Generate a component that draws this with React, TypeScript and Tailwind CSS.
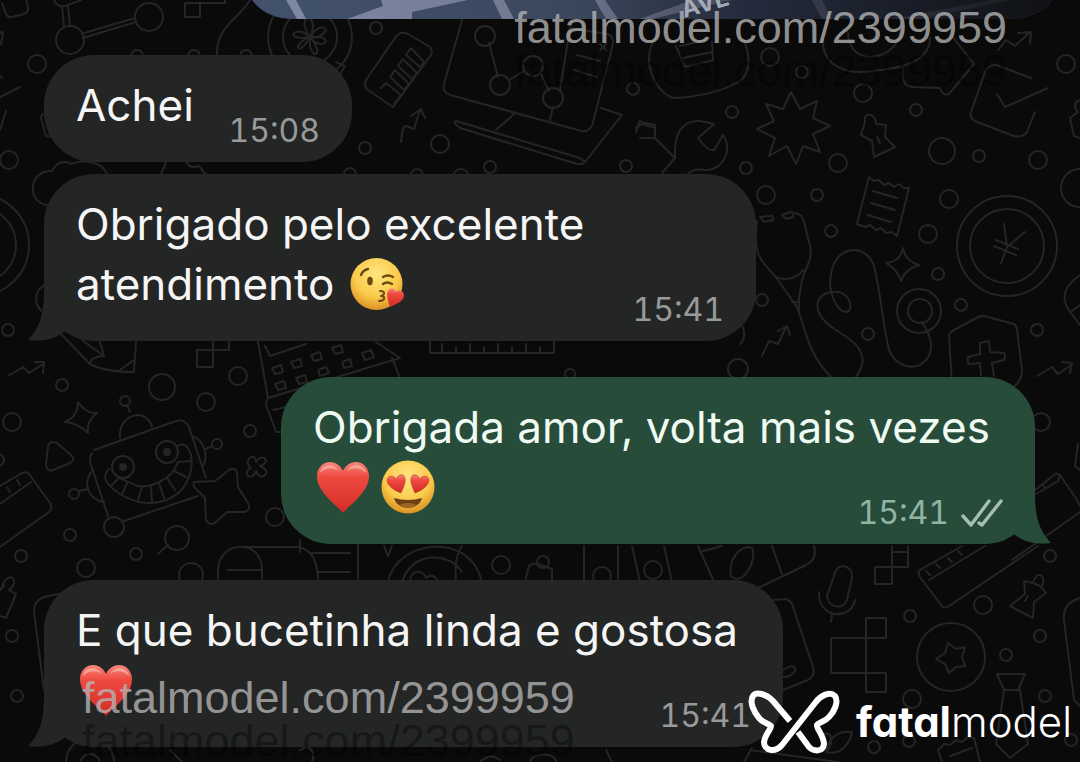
import { ReactNode } from "react";
import clsx from "clsx";

type MessageType = {
  id: number;
  time: string;
  mine?: boolean;
  tail?: boolean;
  size: string;
  body: ReactNode;
};

// cx, cy, r
const bubblesDots = [
  [70, 40, 14], [149, 17, 14], [37, 64, 9], [9, 160, 9], [137, 56, 6], [194, 56, 6], [246, 56, 6],
  [376, 28, 6], [485, 36, 10], [500, 85, 10], [533, 66, 10], [553, 98, 10], [365, 148, 6], [440, 144, 9],
  [490, 167, 6], [350, 174, 6], [417, 175, 6], [461, 177, 8], [633, 89, 6], [626, 166, 6],
  [770, 57, 9], [802, 72, 6], [732, 112, 6], [863, 93, 9], [916, 110, 6], [838, 163, 9], [746, 168, 6],
  [942, 151, 13], [979, 156, 6], [1038, 160, 9], [1066, 64, 9], [766, 195, 9], [817, 195, 6], [949, 199, 9],
  [831, 231, 6], [928, 234, 9], [938, 274, 6], [762, 300, 6], [868, 334, 6], [961, 305, 6], [1037, 330, 6],
  [1080, 188, 19], [738, 369, 10], [919, 311, 22], [920, 311, 12], [1007, 246, 50], [1007, 246, 37],
  [62, 385, 6], [162, 387, 13], [206, 402, 9], [238, 376, 9], [12, 422, 9], [125, 401, 5], [250, 431, 6],
  [217, 444, 5], [275, 517, 9], [74, 494, 5], [114, 527, 10], [177, 538, 12], [136, 554, 6], [21, 556, 6],
  [86, 568, 9], [191, 575, 12], [70, 535, 6], [8, 330, 6], [-2, 460, 6], [12, 636, 6], [17, 696, 6],
  [501, 565, 9], [543, 562, 6], [602, 576, 9], [653, 570, 9], [570, 374, 5], [1041, 422, 9], [1050, 556, 6],
  [983, 605, 9], [910, 616, 6], [1040, 636, 6], [1006, 655, 6], [951, 657, 34], [912, 699, 9], [1045, 696, 6],
  [874, 747, 6], [909, 741, 6], [1071, 740, 6], [310, 37, 42], [310, 37, 27], [123, 467, 11], [167, 452, 11],
  [-22, 245, 38], [-22, 245, 51], [90, 762, 24], [90, 764, 10], [695, 10, 9],
];

const doodles = [
  // card, molecule and arrows in the top left corner
  "M2 3 L6 14 Q8 18 12 17 L24 14 Q29 12 28 7 L26 0",
  "M64 27 L62 6 M70 26 L68 6 M84 33 L135 18 M83 38 L136 22 M54 0 Q58 8 65 6 L81 0",
  "M0 97 L20 87 M0 130 L6 111 M0 76 L2 78 M-4 34 L3 32 L1 44",
  "M43 114 Q40 116 42 122 L46 136 L54 137",
  "M185 17 V3 H200 V17 Z M200 3 H225 V-3 M250 0 C240 18 216 26 217 55",
  "M338 78 L345 66 L336 62",
  // flower in the coin
  "M310 37 C300 22 306 18 310 18 C314 22 314 28 310 37 C320 22 328 28 325 32 C320 38 315 38 310 37 C326 36 330 42 322 44 C316 44 312 40 310 37 C320 50 318 54 314 54 C310 50 309 44 310 37 C303 50 297 50 298 46 C302 40 306 38 310 37 C294 40 290 34 296 32 C302 30 306 34 310 37",
  // cloud and hat between the first two bubbles
  "M47 205 C30 203 28 180 42 173 C48 170 51 172 53 170 C56 162 66 160 71 164 C84 158 102 162 107 174",
  "M161 174 L167 160 L186 161 C188 167 194 168 198 166 C204 168 202 174 206 174",
  "M45 285 C34 290 33 305 43 312",
  // memory card
  "M366 80 L395 38 Q400 30 408 34 L430 47 Q433 51 431 55 L393 107 L368 90 Q363 86 366 80 Z M381 88 L386 83 L401 95 L394 104 M390 77 L395 70 L409 84 L404 90 Z M398 66 L403 59 L417 73 L412 79 Z M406 55 L411 48 L424 62 L420 67 Z",
  "M401 142 C402 132 403 126 406 126 L414 129 L420 110 M411 116 L421 109 L425 118",
  // laptop
  "M462 20 L444 84 Q442 92 450 95 L578 130 Q587 134 592 126 L613 44 Q614 36 607 34 L570 28 L560 90 M489 43 L498 77 M509 80 L524 71 M541 74 L549 91 M553 107 L550 120 M514 114 L496 130 M601 108 L622 115 L585 162 Q581 166 574 163 L460 128 Q452 122 456 121 L580 158 L585 162 M577 55 L600 61 M574 70 L597 77 M600 44 L606 50 M606 44 L600 50",
  // light bulb
  "M655 38 C642 60 652 88 672 98 C690 98 720 92 732 85 C750 80 752 60 744 40 M676 46 L685 67 L713 60 L712 42 M680 46 L706 40 M683 58 L712 52",
  // speech ball and chat
  "M823 40 C822 62 840 72 860 72 C890 70 930 66 930 38 M848 32 C848 70 900 60 900 30",
  "M903 66 V78 Q904 86 912 87 L940 88 Q942 96 949 94 L974 64 L952 36",
  "M998 50 L1006 40 L1015 46 L1030 32 M1018 33 L1031 32 L1030 44",
  // wrench
  "M640 122 L655 125 V138 H640 M655 138 L675 158 L662 173 M675 158 C674 136 680 120 700 121 L714 124 L698 138 Q708 152 714 150 L723 135 C734 150 722 172 704 170 Q694 168 688 174",
  "M636 128 L642 124 L655 128 M636 132 L640 120",
  // burst star
  "M791 92 L800 109 L817 101 L813 118 L830 126 L813 134 L820 152 L803 146 L796 164 L787 146 L769 156 L775 138 L757 129 L774 121 L766 104 L783 109 Z",
  // pin
  "M865 122 C862 112 876 112 876 124 L886 125 L885 137 L895 147 L874 157 L872 141 L861 135 Z M877 137 L880 143",
  "M1031 78 L996 65 Q989 64 985 72 L971 112 Q969 119 977 122 L1014 136 Q1023 138 1027 132 L1035 112 M997 94 L1005 107 L1048 88",
  "M1080 100 C1072 102 1076 112 1078 112 L1070 118 L1074 136 L1080 138",
  // receipt
  "M869 177 L874 181 L879 180 L884 185 L889 183 L894 187 L899 184 L904 188 L909 188 L897 236 L892 232 L886 233 L881 228 L876 230 L870 225 L865 227 L857 224 Z M873 191 L897 198 M871 203 L895 210 M868 215 L891 222",
  // stethoscope
  "M760 217 L764 222 L773 220 Q774 215 770 216 Z M782 215 L786 219 L793 217 Q794 212 790 212 Z M757 221 C752 262 765 262 778 280 L797 307 C806 330 808 355 832 378 M795 213 C806 215 804 225 808 238 C816 262 804 264 801 286 Q798 300 799 312 M774 276 C784 282 798 278 803 270 M792 302 H799",
  "M855 378 C876 352 848 338 836 330 C806 310 818 292 833 292 C844 290 852 300 850 309 C844 320 826 298 831 275 C834 245 866 242 874 266 C882 300 882 320 889 350 C900 376 932 370 931 344 Q930 334 922 322",
  "M903 248 Q905 261 919 265 Q904 270 901 281 Q898 270 886 263 Q900 262 903 248 Z",
  "M1004 224 L1007 247 L1025 232 M1007 247 L1001 263 M996 240 L1018 249 M994 246 L1016 255",
  // shield
  "M952 384 L949 335 Q950 332 954 330 L978 317 Q983 315 988 317 L1014 324 Q1017 326 1017 330 L1022 370 Q1022 382 1012 388 M981 376 L980 363 L969 364 Q967 362 968 357 L980 354 V343 L989 341 L990 352 L1004 353 Q1006 356 1004 360 L992 363 L994 376",
  "M1037 376 L1052 367 L1058 374 L1071 365 M1062 362 L1072 363 L1070 373 M1080 275 C1064 286 1060 298 1070 312 L1080 325 M1071 312 L1080 305",
  "M762 356 L769 341 L778 344 L786 327 M778 331 L787 326 L790 335 M740 323 C746 330 745 340 740 344",
  // bottle, squares and calculator below the second bubble
  "M61 334 L90 364 Q105 372 134 372 L136 342 M90 364 C90 356 104 356 104 356 L82 340 M104 356 L100 342 M120 370 L134 360",
  "M8 376 L23 367 L29 373 L43 364 M35 362 L44 362 L43 373",
  "M197 350 H213 V367 H197 Z M213 350 H229 V342 M213 342 V350",
  "M258 342 L268 398 Q264 404 268 410 L276 432 L284 432 M268 398 L400 358 L376 342 M265 346 L270 356 L306 344 M272 368 L281 365 L283 372 L275 374 Z M291 362 L300 359 L302 366 L294 368 Z M311 355 L320 352 L322 359 L314 361 Z M332 348 L341 345 L343 352 L335 354 Z M275 384 L284 381 L286 388 L278 390 Z M296 378 L305 375 L307 382 L299 384 Z M318 370 L326 367 L329 373 L320 376 Z M342 362 L350 359 L352 366 L344 368 Z M362 353 L371 350 L374 357 L365 360 Z M273 410 L290 406 M392 358 L400 378",
  "M430 342 V353 H554 V342 M442 353 V344 M456 353 V347 M470 353 V344 M484 353 V347 M498 353 V344 M512 353 V347 M526 353 V344 M540 353 V347",
  // robot
  "M94 450 L176 421 Q184 418 189 427 L206 478 M92 453 Q88 460 92 468 L108 516 M124 521 L198 496 M120 438 C118 412 148 408 152 427 M130 412 L127 405 M192 436 C204 440 209 456 203 466 M206 449 L212 446 M91 472 C82 486 90 500 104 502 M79 491 L88 489",
  "M109 469 C100 478 108 486 120 494 C150 512 184 502 191 470 C194 452 186 440 178 446 M178 462 C172 480 150 488 138 486 C128 482 116 478 112 470 M112 485 L119 478 M122 494 L127 483 M138 500 L142 487 M152 502 L151 487 M164 498 L159 483 M175 490 L167 478 M186 477 L174 471 M191 461 L178 462",
  "M194 482 Q192 486 197 490 L205 498 L206 520 Q209 526 215 523 L227 512 L245 512 Q251 510 248 503 L238 487 L237 472 Q235 467 229 470 L215 481 Z",
  "M78 402 Q86 414 97 413 Q86 421 88 433 Q78 423 65 422 Q78 416 78 402 Z",
  "M48 446 L46 465 Q47 472 53 470 L70 463 Q76 460 71 455 L57 443 Q50 440 48 446 Z",
  "M251 457 Q256 456 256 462 Q262 454 266 460 Q266 464 260 466 Q268 470 266 474 Q260 480 256 471 Q252 480 247 475 Q246 470 251 468 Q244 462 251 457 Z",
  "M0 486 L22 473 Q26 471 29 474 L50 503 Q53 508 49 512 L0 547 M0 504 L31 482 M10 492 L7 487 M20 485 L17 480 M158 554 L168 545",
  "M2 588 C4 574 18 574 13 586 L9 590 L16 594 L6 618 L0 616 M4 586 L0 590",
  "M64 593 L44 597 Q34 600 34 612 L44 690",
  // gap above the last bubble
  "M218 582 V570 C219 540 262 538 262 570 V582 M245 547 H298 Q318 550 318 582 M228 570 H260 M300 540 V552 M312 553 H350 M318 572 H350 M358 545 V582",
  "M388 582 C396 540 470 530 482 582 M402 582 C412 550 450 552 462 572 M462 546 Q454 556 456 582 M410 582 C410 568 424 570 426 578 Q434 572 438 582 M384 546 L388 556 L392 546",
  "M525 582 L529 566 Q532 563 538 564 L552 569 L552 582 M584 546 V582 M618 546 V582 M632 546 L640 582 M664 546 L672 582",
  "M698 546 L714 582 M700 552 L722 546 M754 590 L804 566 Q818 560 814 546 M772 546 L782 574 M752 548 C740 544 728 560 731 576 C742 588 758 560 752 548",
  // microphone
  "M836 570 C842 562 854 568 852 578 L847 600 C843 610 828 608 827 596 Z M819 592 C818 620 852 620 855 600 M832 614 L831 622",
  "M892 546 V567 M875 567 H892 V584 H875 Z M892 567 H908 V546 M892 552 H908",
  "M831 638 H866 V673 H831 Z M866 638 V618 H886 V638 H866 M866 673 V692 H886 V673 H866",
  "M774 600 L786 599 Q790 600 792 604 L813 667 Q816 675 808 680 L783 690 M783 670 Q796 662 795 671 Q792 677 783 677",
  "M962 546 L920 570 Q917 573 920 577 L942 606 Q945 609 949 606 L1038 546 M929 580 L985 546 M926 571 L930 575 M936 564 L940 568 M948 558 L952 562 M958 551 L962 555",
  // film to the right of the green bubble
  "M1035 490 L1054 475 Q1057 472 1060 475 L1077 500 L1080 506 M1036 494 L1058 481 L1060 475 M1042 484 L1045 488 M1080 512 L1012 560 M1078 444 L1075 466 L1080 470",
  // second pin
  "M1033 583 C1036 570 1047 574 1042 586 M1033 583 L1024 581 L1025 594 L1010 606 L1033 618 L1034 602 L1046 593 L1040 586 Z M1028 596 L1025 601",
  "M948 643 L956 649 L965 647 L962 657 L965 666 L956 667 L949 673 L945 664 L936 659 L945 653 Z",
  "M997 674 H1025 L1018 690 H1004 Z M1004 690 L996 744 L1010 758 L1028 744 L1020 690",
  "M1080 598 Q1062 604 1064 620 L1074 700 L1080 706",
  "M938 750 L944 744 L950 745 L956 740 L962 742 L968 737 L974 738 L980 762 M938 750 L942 762 M950 756 L972 748",
  "M826 752 C836 742 830 728 822 736 M826 752 C842 756 850 742 852 732 C836 730 828 740 826 752 M750 750 L838 762 M744 762 L752 748",
  "M170 750 L182 762 M300 750 C310 744 316 752 312 762 M480 762 Q490 752 500 760 M530 762 C532 752 556 752 556 762 M606 750 L612 762",
];

const Wallpaper = () => (
  <svg
    viewBox="0 0 1080 762"
    preserveAspectRatio="xMinYMin slice"
    className="absolute inset-0 size-full"
    fill="none"
    stroke="#252525"
    strokeWidth="2"
    strokeLinecap="round"
    strokeLinejoin="round"
    aria-hidden="true"
  >
    {bubblesDots.map(([cx, cy, r], i) => (
      <circle key={i} cx={cx} cy={cy} r={r} />
    ))}
    <g fill="#252525">
      <circle cx="123" cy="467" r="3" />
      <circle cx="167" cy="452" r="3" />
    </g>
    {doodles.map((d) => (
      <path key={d} d={d} />
    ))}
  </svg>
);

const MapPreview = () => (
  <svg
    viewBox="0 0 800 19"
    preserveAspectRatio="xMinYMax slice"
    className="block h-[19px] w-full overflow-visible"
    role="img"
    aria-label="Mapa"
  >
    <defs>
      <linearGradient id="shade" x1="0" x2="1" y1="0" y2="0">
        <stop offset="0" stopColor="#0a0a0a" stopOpacity="0" />
        <stop offset="0.4" stopColor="#0a0a0a" stopOpacity="0.15" />
        <stop offset="0.62" stopColor="#0a0a14" stopOpacity="0.55" />
        <stop offset="1" stopColor="#0a0a0a" stopOpacity="0.9" />
      </linearGradient>
      <clipPath id="corner">
        <path d="M0 0 H800 Q790 16 760 19 H42 Q14 19 0 0 Z" />
      </clipPath>
    </defs>
    <g clipPath="url(#corner)">
      <path d="M0 0 H800 V19 H0 Z" fill="#43526c" />
      <path d="M34 0 H44 L54 19 H45 Z M95 19 L131 6 L129 0 H192 L160 12 V19 Z M95 19 L131 6 L129 0 H216 L160 12 V19 Z M241 0 H252 L262 19 H250 Z M343 0 H353 L366 19 H354 Z M388 19 L440 0 H480 L400 19 Z M560 0 H570 L580 19 H570 Z M670 19 L760 0 H740 L640 19 Z" fill="#8189a5" />
      <path d="M0 0 H800 V19 H0 Z" fill="url(#shade)" />
    </g>
    <text
      x="432"
      y="18"
      transform="rotate(-16 432 18)"
      fill="#a4a9b8"
      fontFamily="Inter, sans-serif"
      fontWeight="700"
      fontSize="24"
    >
      AVE
    </text>
  </svg>
);

const emojiClass = "mr-2 ml-[3px] inline-block size-[54px] align-[-11px]";

const EmojiDefs = () => (
  <svg className="absolute size-0" aria-hidden="true">
    <defs>
      <radialGradient id="face" cx="0.5" cy="0.32" r="0.7">
        <stop offset="0" stopColor="#ffe683" />
        <stop offset="0.6" stopColor="#fbcb4c" />
        <stop offset="1" stopColor="#d98d20" />
      </radialGradient>
      <linearGradient id="heart" x1="0" x2="0" y1="0" y2="1">
        <stop offset="0" stopColor="#f7867c" />
        <stop offset="0.3" stopColor="#ee4a40" />
        <stop offset="1" stopColor="#d22b25" />
      </linearGradient>
    </defs>
  </svg>
);

const RedHeart = () => (
  <svg viewBox="0 0 54 54" className={emojiClass} role="img" aria-label="❤️">
    <path d="M27 53 C22 46 1 33 1 16 C1 8 7 2 14 2 C20 2 25 6 27 11 C29 6 34 2 40 2 C47 2 53 8 53 16 C53 33 32 46 27 53 Z" fill="url(#heart)" />
    <path d="M4 13 C5 4 18 2 23 11 C18 7 9 7 4 13 Z M31 11 C36 2 49 4 50 13 C45 7 36 7 31 11 Z" fill="#fbb9ae" opacity="0.7" />
  </svg>
);

const HeartEyes = () => (
  <svg viewBox="0 0 54 54" className={emojiClass} role="img" aria-label="😍">
    <circle cx="27" cy="27" r="26.5" fill="url(#face)" />
    <path d="M20 33 C14 31 6 26 6 20 C7 15 13 15 15 19 C17 14 23 13 24 18 C25 23 22 28 20 33 Z" fill="url(#heart)" stroke="#b5402a" strokeWidth="0.6" />
    <path d="M34 33 C32 28 29 23 30 18 C31 13 37 14 39 19 C41 15 47 15 48 20 C48 26 40 31 34 33 Z" fill="url(#heart)" stroke="#b5402a" strokeWidth="0.6" />
    <path d="M13 38 Q27 42 41 38 C38 51 16 51 13 38 Z" fill="#6e3f12" />
    <path d="M18 45 Q27 41 36 45 Q27 50 18 45 Z" fill="#9a6524" />
  </svg>
);

const KissFace = () => (
  <svg viewBox="0 0 54 54" className={emojiClass} role="img" aria-label="😘">
    <circle cx="26.5" cy="27" r="26" fill="url(#face)" />
    <g fill="none" stroke="#6b4a12" strokeWidth="2.4" strokeLinecap="round" strokeLinejoin="round">
      <path d="M11 18 Q13 13 18 12" />
      <path d="M33 20 Q38 17 43 20" />
      <path d="M33 27 Q37 24 42 27" />
      <path d="M30 34 Q35 34 34 37 Q33 39 31 39 Q35 39 34 42 Q33 44 29 44" strokeWidth="2" />
    </g>
    <ellipse cx="20" cy="24" rx="2.8" ry="4.2" fill="#6b4a12" />
    <path d="M40 50 C38 44 36 38 38 34 C40 30 45 31 46 35 C49 32 54 34 54 39 C53 45 46 47 40 50 Z" fill="url(#heart)" />
  </svg>
);

const messages: MessageType[] = [
  { id: 1, time: "15:08", size: "mt-9 max-w-[308px]", body: "Achei" },
  {
    id: 2,
    time: "15:41",
    tail: true,
    size: "mt-3 max-w-[712px]",
    body: <>Obrigado pelo excelente atendimento <KissFace /></>,
  },
  {
    id: 3,
    time: "15:41",
    tail: true,
    mine: true,
    size: "mt-9 max-w-[754px]",
    body: <>Obrigada amor, volta mais vezes <RedHeart /><HeartEyes /></>,
  },
  {
    id: 4,
    time: "15:41",
    tail: true,
    size: "mt-9 max-w-[739px]",
    body: <>E que bucetinha linda e gostosa <RedHeart /></>,
  },
];

function Bubble({ message }: { message: MessageType }) {
  const { mine, tail, size, time, body } = message;
  return (
    <li
      className={clsx(
        "relative flex w-full flex-col rounded-[50px] pt-5 pr-8 pb-3 pl-8",
        size,
        mine ? "self-end bg-[#274c3a]" : "self-start bg-[#242625]"
      )}
    >
      {tail && (
        <svg
          viewBox="0 0 60 52"
          className={clsx(
            "absolute bottom-0 h-[52px] w-[60px]",
            mine ? "-right-4 -scale-x-100 fill-[#274c3a]" : "-left-4 fill-[#242625]"
          )}
          aria-hidden="true"
        >
          <path d="M16 0 C16 26 12 38 0 51 C14 53 28 50 37 42 L60 30 V0 Z" />
        </svg>
      )}
      <p className={clsx("relative text-[44px] leading-[60px]", mine ? "text-[#eefaf2]" : "text-[#f5f5f5]")}>
        {body}
      </p>
      <div
        className={clsx(
          "relative -mt-6 flex items-center gap-3 self-end text-[32px] leading-[39px] tabular-nums",
          mine ? "text-[#93b3a3]" : "text-[#989a99]"
        )}
      >
        <time>{time}</time>
        {mine && (
          <svg viewBox="0 0 42 28" className="h-7 w-[42px]" fill="none" stroke="#a5bfb1" strokeWidth="3.4" strokeLinecap="round" strokeLinejoin="round" role="img" aria-label="Entregue">
            <path d="M2 17 L10 26 L28 2 M18 24 L21 26 L40 2" />
          </svg>
        )}
      </div>
    </li>
  );
}

function Watermark({ className }: { className: string }) {
  return (
    <div className={clsx("pointer-events-none absolute font-['Liberation_Sans',sans-serif] text-[45px] leading-[43px]", className)}>
      <p className="text-[#b4b4b4]/80">fatalmodel.com/2399959</p>
      <p className="text-black/40" aria-hidden="true">fatalmodel.com/2399959</p>
    </div>
  );
}

const Brand = () => (
  <div className="absolute right-2 bottom-2 flex items-center gap-4 text-white">
    <svg viewBox="0 0 92 64" className="h-16 w-[92px]" fill="none" stroke="currentColor" strokeWidth="6" strokeLinecap="butt" strokeLinejoin="round" aria-hidden="true">
      <path d="M42 31 L25 11 C18 4 8 1 5 6 C1 12 6 22 11 28 C15 33 20 33 23 36 C24 38 17 44 16 52 C16 61 27 63 34 55 L67 13 C73 5 82 1 87 6 C91 12 86 22 81 27 C77 32 71 32 69 35 C68 38 76 46 76 54 C75 62 66 62 61 57 L50 42" />
    </svg>
    <p className="text-[42px] leading-[44px] font-light [font-feature-settings:'cv11']">
      <b className="font-bold">fatal</b>model
    </p>
  </div>
);

export default function App() {
  return (
    <main className="relative min-h-screen overflow-hidden bg-[#0a0a0a] font-['Inter',sans-serif]">
      <Wallpaper />
      <EmojiDefs />
      <div className="relative pr-7 pl-[252px]">
        <MapPreview />
      </div>
      <ul className="relative flex flex-col pr-[45px] pb-3 pl-11">
        {messages.map((message) => (
          <Bubble key={message.id} message={message} />
        ))}
      </ul>
      <Watermark className="top-[6px] right-[73px]" />
      <Watermark className="bottom-0 left-[82px]" />
      <Brand />
    </main>
  );
}
